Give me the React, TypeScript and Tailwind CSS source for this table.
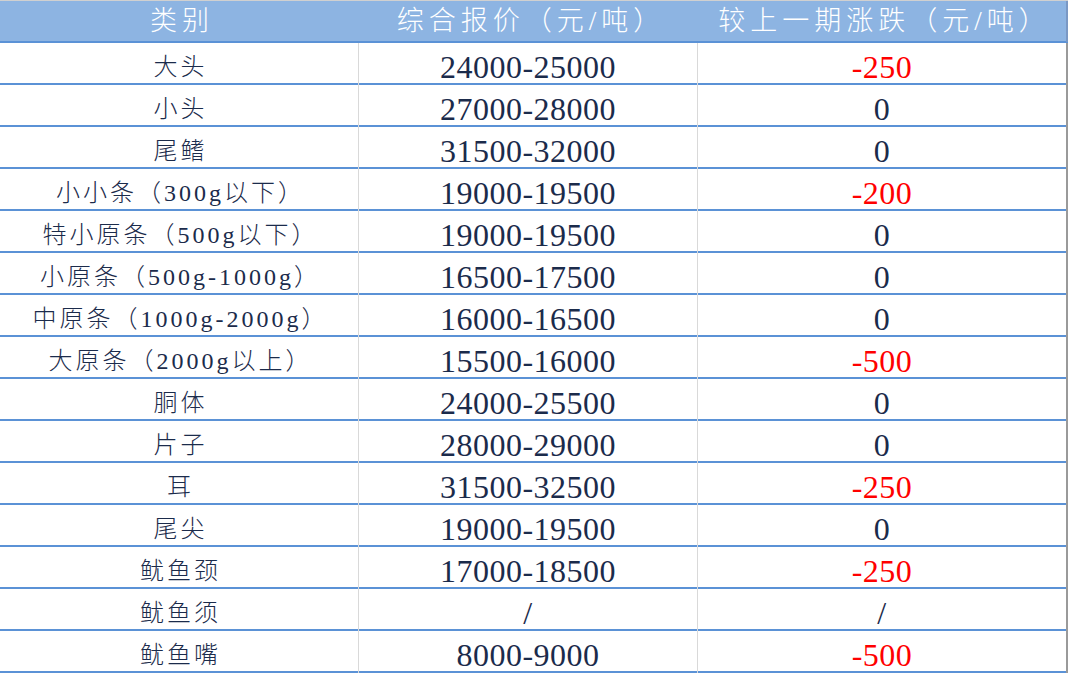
const rows: [string, string, string][] = [
  ['大头', '24000-25000', '-250'],
  ['小头', '27000-28000', '0'],
  ['尾鳍', '31500-32000', '0'],
  ['小小条（300g以下）', '19000-19500', '-200'],
  ['特小原条（500g以下）', '19000-19500', '0'],
  ['小原条（500g-1000g）', '16500-17500', '0'],
  ['中原条（1000g-2000g）', '16000-16500', '0'],
  ['大原条（2000g以上）', '15500-16000', '-500'],
  ['胴体', '24000-25500', '0'],
  ['片子', '28000-29000', '0'],
  ['耳', '31500-32500', '-250'],
  ['尾尖', '19000-19500', '0'],
  ['鱿鱼颈', '17000-18500', '-250'],
  ['鱿鱼须', '/', '/'],
  ['鱿鱼嘴', '8000-9000', '-500'],
];

const font = { fontFamily: '"Liberation Serif", "Noto Sans CJK SC", serif' };

export default function App() {
  return (
    <div className="w-[1068px] h-[673px] bg-white overflow-hidden" style={font}>
      {/* header */}
      <div className="grid grid-cols-[359px_339px_1fr] h-[43px] bg-[#8db4e2] border-t border-[#d0d0d0] border-b-2 border-b-[#5b92d6] text-white text-[27px] font-light tracking-[5px]">
        <div className="flex items-center justify-center pl-[5px]">类别</div>
        <div className="flex items-center justify-center pl-[5px]">综合报价（元/吨）</div>
        <div className="flex items-center justify-center pl-[5px] border-r-2 border-r-[#7a98c4]">较上一期涨跌（元/吨）</div>
      </div>

      {rows.map(([name, price, diff]) => (
        <div
          key={name}
          className="grid grid-cols-[359px_339px_1fr] h-[42px] border-b-2 border-[#5b92d6] text-[#1b2b4b]"
        >
          <div className="flex items-center justify-center pl-[3px] border-r border-[#d9d9d9] text-[24px] font-light tracking-[3px]">
            {name}
          </div>
          <div className="flex items-center justify-center border-r border-[#d9d9d9] text-[32px] tracking-[0.5px]">
            {price}
          </div>
          <div
            className={
              'flex items-center justify-center border-r-2 border-r-[#9a9a9a] text-[32px] tracking-[0.5px] ' +
              (diff.startsWith('-') ? 'text-[#ff0000]' : '')
            }
          >
            {diff}
          </div>
        </div>
      ))}
    </div>
  );
}
